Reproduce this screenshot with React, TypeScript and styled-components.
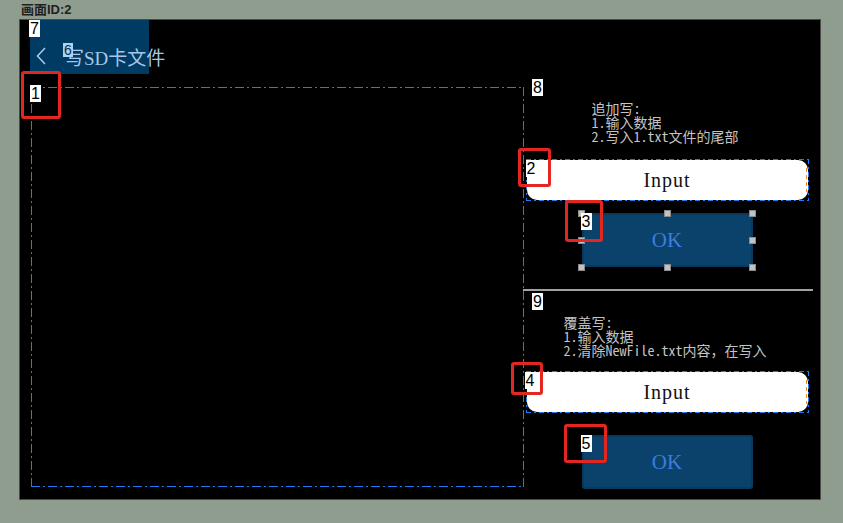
import React from 'react';
import styled, { createGlobalStyle, css } from 'styled-components';

const LINE_BLUE = '#1a7cf8';

const GlobalStyle = createGlobalStyle`
  html, body {
    margin: 0;
    padding: 0;
  }
  body {
    background: #8f9d8f;
    font-family: "Liberation Sans", "Noto Sans CJK SC", sans-serif;
  }
`;

// dash-dot outline drawn with gradients, like the editor's selection frames
const dashDot = (color: string, dash = 9) => {
  const h = `repeating-linear-gradient(90deg, ${color} 0 ${dash}px, transparent ${dash}px ${dash + 3}px, ${color} ${dash + 3}px ${dash + 5}px, transparent ${dash + 5}px ${dash + 8}px)`;
  const v = h.replace('90deg', '180deg');
  return css`
    background-image: ${h}, ${h}, ${v}, ${v};
    background-size: 100% 1px, 100% 1px, 1px 100%, 1px 100%;
    background-position: left top, left bottom, left top, right top;
    background-repeat: no-repeat;
  `;
};

const Page = styled.div`
  width: 843px;
  height: 523px;
  overflow: hidden;
`;

const PageTitle = styled.div`
  height: 19px;
  padding-left: 21px;
  font: bold 13px/19px "Liberation Sans", "Noto Sans CJK SC", sans-serif;
  color: #1f1f1f;
`;

const Screen = styled.div`
  margin-left: 19px;
  width: 802px;
  height: 481px;
  box-sizing: border-box;
  border: 1px solid #4a4a4a;
  background: #000;
  display: flex;
  flex-direction: column;
`;

const Header = styled.div`
  height: 54px;
  flex-shrink: 0;
  display: flex;
  padding-left: 10px;
`;

const TitleBlock = styled.div`
  position: relative;
  width: 119px;
  height: 54px;
  box-sizing: border-box;
  padding: 27px 0 0 6px;
  background: #003b63;
  display: flex;
  align-items: flex-start;
  gap: 19px;

  & > * {
    flex-shrink: 0;
  }
`;

const TitleText = styled.div`
  position: relative;
  margin-top: 2px;
  font: 19px/20px "Liberation Serif", "Noto Sans CJK SC", serif;
  color: #a6c8e8;
  white-space: nowrap;
`;

const Badge = styled.span<{ $x: number; $y: number; $tint?: boolean }>`
  position: absolute;
  left: ${({ $x }) => $x}px;
  top: ${({ $y }) => $y}px;
  z-index: 3;
  width: ${({ $tint }) => ($tint ? 10 : 11)}px;
  height: ${({ $tint }) => ($tint ? 14 : 17)}px;
  background: ${({ $tint }) => ($tint ? '#a9d5f5' : '#fff')};
  color: ${({ $tint }) => ($tint ? '#0d2a48' : '#000')};
  font: ${({ $tint }) => ($tint ? '14px/14px' : '16px/17px')} "Liberation Sans", sans-serif;
  text-align: center;
`;

const RedMark = styled.span<{ $x: number; $y: number; $w: number; $h: number }>`
  position: absolute;
  left: ${({ $x }) => $x}px;
  top: ${({ $y }) => $y}px;
  width: ${({ $w }) => $w}px;
  height: ${({ $h }) => $h}px;
  z-index: 2;
  box-sizing: border-box;
  border: 3px solid #e3261f;
  border-radius: 3px;
  pointer-events: none;
`;

const Body = styled.div`
  flex: 1;
  display: flex;
`;

const ListArea = styled.div`
  position: relative;
  flex-shrink: 0;
  margin: 13px 0 0 11px;
  width: 493px;
  height: 400px;
  ${dashDot(LINE_BLUE)}
`;

const Side = styled.div`
  margin-left: -1px;
  width: 290px;
  display: flex;
  flex-direction: column;
`;

const Section = styled.div<{ $h?: number; $pad: number }>`
  position: relative;
  display: flex;
  flex-direction: column;
  align-items: center;
  padding: ${({ $pad }) => $pad}px 2px 0 0;
  ${({ $h }) => ($h ? `height: ${$h}px; box-sizing: border-box;` : 'flex: 1;')}
`;

const Divider = styled.div`
  height: 2px;
  flex-shrink: 0;
  background: #a2a2a2;
`;

const Note = styled.div`
  margin-right: 4px;
  font: 14px/14px "Noto Sans Mono CJK SC", "Noto Sans CJK SC", monospace;
  color: #c4c4c4;
  white-space: pre;
`;

const InputFrame = styled.div<{ $gap: number }>`
  position: relative;
  margin-top: ${({ $gap }) => $gap}px;
  width: 283px;
  height: 42px;
  box-sizing: border-box;
  padding: 1px;
  ${dashDot(LINE_BLUE, 5)}
`;

const InputField = styled.div`
  position: relative;
  height: 100%;
  background: #fff;
  border-radius: 10px;
  display: flex;
  align-items: center;
  justify-content: center;
  font: 20px "Liberation Serif", serif;
  letter-spacing: 1px;
  color: #111;

  &::after {
    content: '';
    position: absolute;
    right: 1px;
    top: 8px;
    bottom: 8px;
    width: 1px;
    background: repeating-linear-gradient(180deg, #f08a24 0 4px, transparent 4px 7px);
  }
`;

const OkButton = styled.div<{ $gap: number }>`
  position: relative;
  margin-top: ${({ $gap }) => $gap}px;
  width: 171px;
  height: 54px;
  box-sizing: border-box;
  border: 2px solid #083a60;
  border-radius: 3px;
  background: #0a426c;
  display: flex;
  align-items: center;
  justify-content: center;
  font: 21px "Liberation Serif", serif;
  color: #3b7ddf;
`;

const HandleLayer = styled.div`
  position: absolute;
  inset: -2px;
  pointer-events: none;
`;

const Handle = styled.span<{ $x: number; $y: number }>`
  position: absolute;
  left: calc(${({ $x }) => $x}% - 3.5px);
  top: calc(${({ $y }) => $y}% - 3.5px);
  width: 7px;
  height: 7px;
  box-sizing: border-box;
  background: #c2c2c2;
  border: 1px solid #8a8a8a;
`;

const handleSpots: [number, number][] = [
  [0, 0], [50, 0], [100, 0],
  [0, 50], [100, 50],
  [0, 100], [50, 100], [100, 100],
];

const BackIcon = () => (
  <svg width="10" height="18" viewBox="0 0 10 18">
    <polyline points="9,1 1.5,9 9,17" fill="none" stroke="#a6c8e8" strokeWidth="1.6" />
  </svg>
);

const App: React.FC = () => (
  <Page>
    <GlobalStyle />
    <PageTitle>画面ID:2</PageTitle>
    <Screen>
      <Header>
        <TitleBlock>
          <Badge $x={-1} $y={0}>7</Badge>
          <BackIcon />
          <TitleText>
            写SD卡文件
            <Badge $x={-2} $y={-6} $tint>6</Badge>
          </TitleText>
        </TitleBlock>
      </Header>

      <Body>
        <ListArea>
          <Badge $x={-1} $y={-2}>1</Badge>
          <RedMark $x={-10} $y={-16} $w={40} $h={48} />
        </ListArea>

        <Side>
          <Section $h={215} $pad={27}>
            <Badge $x={9} $y={5}>8</Badge>
            <Note>{'追加写:\n1.输入数据\n2.写入1.txt文件的尾部'}</Note>
            <InputFrame $gap={16}>
              <InputField>Input</InputField>
              <Badge $x={0} $y={1}>2</Badge>
              <RedMark $x={-8} $y={-11} $w={33} $h={39} />
            </InputFrame>
            <OkButton $gap={12}>
              OK
              <HandleLayer>
                {handleSpots.map(([x, y]) => (
                  <Handle key={`${x}-${y}`} $x={x} $y={y} />
                ))}
              </HandleLayer>
              <Badge $x={-3} $y={-2}>3</Badge>
              <RedMark $x={-19} $y={-15} $w={38} $h={42} />
            </OkButton>
          </Section>

          <Divider />

          <Section $pad={24}>
            <Badge $x={9} $y={2}>9</Badge>
            <Note>{'覆盖写:\n1.输入数据\n2.清除NewFile.txt内容，在写入'}</Note>
            <InputFrame $gap={14}>
              <InputField>Input</InputField>
              <Badge $x={-1} $y={1}>4</Badge>
              <RedMark $x={-15} $y={-9} $w={32} $h={33} />
            </InputFrame>
            <OkButton $gap={22}>
              OK
              <Badge $x={-3} $y={-2}>5</Badge>
              <RedMark $x={-20} $y={-13} $w={43} $h={39} />
            </OkButton>
          </Section>
        </Side>
      </Body>
    </Screen>
  </Page>
);

export default App;
